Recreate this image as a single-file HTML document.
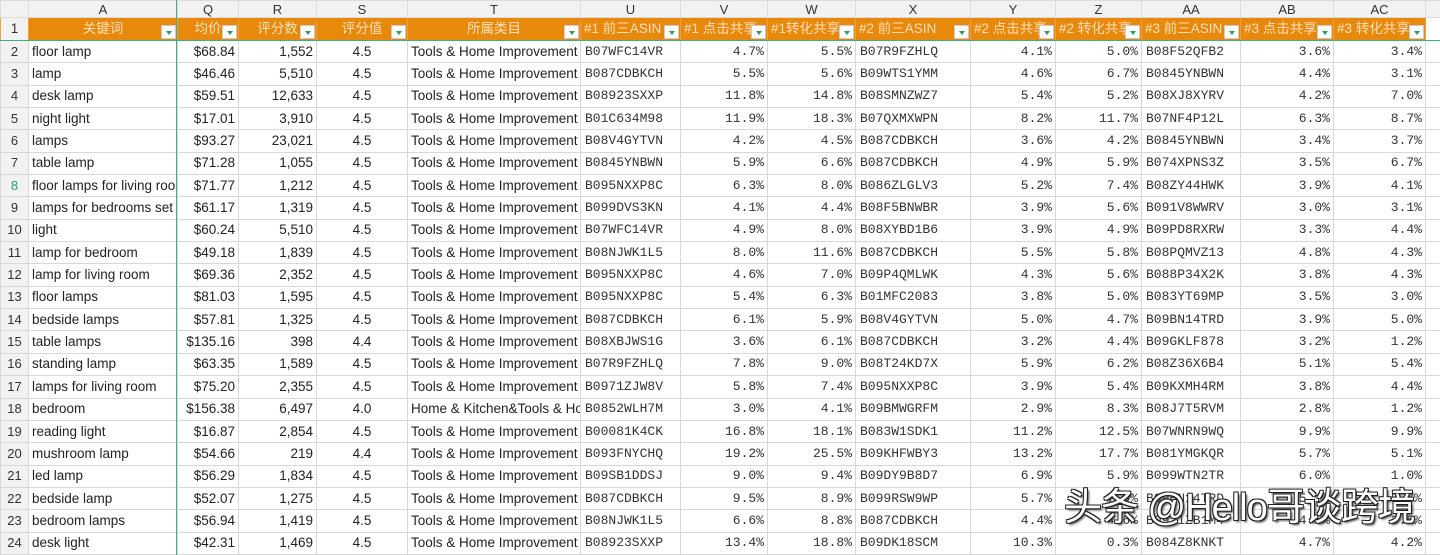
<!DOCTYPE html>
<html><head><meta charset="utf-8"><style>
*{margin:0;padding:0;box-sizing:border-box}
body{width:1440px;height:555px;overflow:hidden;background:#fff;font-family:"Liberation Sans","Noto Sans CJK SC",sans-serif;font-size:13.5px;color:#222;position:relative}
table{border-collapse:collapse;table-layout:fixed;position:absolute;left:0;top:0;width:1440px}
td{border:1px solid #d8d8d8;white-space:nowrap;overflow:hidden;height:22.35px;padding:0 3px;line-height:20px}
tr.ch td{height:17px;background:#f2f2f2;text-align:center;color:#333;font-size:13px;line-height:15px;border-color:#dcdcdc}
tr.h td{height:23px;background:#e8890c;color:#fbe0bc;position:relative;font-size:13.5px;border-color:#f0a040}
tr.h td span.b{position:absolute;right:1px;bottom:1px;width:15px;height:14px;background:#fff;border:1px solid #ccc}
tr.h td span.b:after{content:"";position:absolute;left:4px;top:5px;border-left:3px solid transparent;border-right:3px solid transparent;border-top:4px solid #2a9d6a}
td:first-child{background:#f2f2f2;text-align:center;color:#333;padding:0;font-size:13px}
tr.h td:first-child{background:#f2f2f2;color:#333}
.r td:nth-child(3),.r td:nth-child(4){text-align:right}
.r td:nth-child(5){text-align:center}
.r td:nth-child(n+7){font-family:"Liberation Mono",monospace;font-size:13px;text-align:right;color:#333}
.r td:nth-child(7),.r td:nth-child(10),.r td:nth-child(13){text-align:left;padding-left:4px}
.r td:nth-child(16){background:#fff}
.wm{position:absolute;left:1064px;top:476px;font-size:38px;letter-spacing:-1px;color:#fff;text-shadow:1px 1px 0 #222,-1px -1px 0 #222,1px -1px 0 #222,-1px 1px 0 #222,2px 2px 2px #444;font-family:"Liberation Sans","Noto Sans CJK SC",sans-serif;white-space:nowrap}
.vl{position:absolute;left:176px;top:0;width:1px;height:555px;background:#3cb083}
.hl{position:absolute;left:0;top:40px;width:1440px;height:1px;background:#3cb083}
</style></head><body>
<table>
<colgroup><col style="width:28px"><col style="width:149px"><col style="width:61px"><col style="width:78px"><col style="width:91px"><col style="width:173px"><col style="width:100px"><col style="width:87px"><col style="width:88px"><col style="width:115px"><col style="width:85px"><col style="width:86px"><col style="width:99px"><col style="width:93px"><col style="width:92px"><col style="width:15px"></colgroup>
<tr class="ch"><td></td><td>A</td><td>Q</td><td>R</td><td>S</td><td>T</td><td>U</td><td>V</td><td>W</td><td>X</td><td>Y</td><td>Z</td><td>AA</td><td>AB</td><td>AC</td><td></td></tr>
<tr class="h"><td>1</td><td style="text-align:center">关键词<span class="b"></span></td><td style="text-align:center">均价<span class="b"></span></td><td style="text-align:center">评分数<span class="b"></span></td><td style="text-align:center">评分值<span class="b"></span></td><td style="text-align:center">所属类目<span class="b"></span></td><td>#1 前三ASIN<span class="b"></span></td><td>#1 点击共享<span class="b"></span></td><td>#1转化共享<span class="b"></span></td><td>#2 前三ASIN<span class="b"></span></td><td>#2 点击共享<span class="b"></span></td><td>#2 转化共享<span class="b"></span></td><td>#3 前三ASIN<span class="b"></span></td><td>#3 点击共享<span class="b"></span></td><td>#3 转化共享<span class="b"></span></td><td style="background:#fff;border-color:#ddd"></td></tr>
<tr class="r"><td>2</td><td>floor lamp</td><td>$68.84</td><td>1,552</td><td>4.5</td><td>Tools &amp; Home Improvement</td><td>B07WFC14VR</td><td>4.7%</td><td>5.5%</td><td>B07R9FZHLQ</td><td>4.1%</td><td>5.0%</td><td>B08F52QFB2</td><td>3.6%</td><td>3.4%</td><td></td></tr>
<tr class="r"><td>3</td><td>lamp</td><td>$46.46</td><td>5,510</td><td>4.5</td><td>Tools &amp; Home Improvement</td><td>B087CDBKCH</td><td>5.5%</td><td>5.6%</td><td>B09WTS1YMM</td><td>4.6%</td><td>6.7%</td><td>B0845YNBWN</td><td>4.4%</td><td>3.1%</td><td></td></tr>
<tr class="r"><td>4</td><td>desk lamp</td><td>$59.51</td><td>12,633</td><td>4.5</td><td>Tools &amp; Home Improvement</td><td>B08923SXXP</td><td>11.8%</td><td>14.8%</td><td>B08SMNZWZ7</td><td>5.4%</td><td>5.2%</td><td>B08XJ8XYRV</td><td>4.2%</td><td>7.0%</td><td></td></tr>
<tr class="r"><td>5</td><td>night light</td><td>$17.01</td><td>3,910</td><td>4.5</td><td>Tools &amp; Home Improvement</td><td>B01C634M98</td><td>11.9%</td><td>18.3%</td><td>B07QXMXWPN</td><td>8.2%</td><td>11.7%</td><td>B07NF4P12L</td><td>6.3%</td><td>8.7%</td><td></td></tr>
<tr class="r"><td>6</td><td>lamps</td><td>$93.27</td><td>23,021</td><td>4.5</td><td>Tools &amp; Home Improvement</td><td>B08V4GYTVN</td><td>4.2%</td><td>4.5%</td><td>B087CDBKCH</td><td>3.6%</td><td>4.2%</td><td>B0845YNBWN</td><td>3.4%</td><td>3.7%</td><td></td></tr>
<tr class="r"><td>7</td><td>table lamp</td><td>$71.28</td><td>1,055</td><td>4.5</td><td>Tools &amp; Home Improvement</td><td>B0845YNBWN</td><td>5.9%</td><td>6.6%</td><td>B087CDBKCH</td><td>4.9%</td><td>5.9%</td><td>B074XPNS3Z</td><td>3.5%</td><td>6.7%</td><td></td></tr>
<tr class="r"><td style="color:#2a9d6a">8</td><td>floor lamps for living room</td><td>$71.77</td><td>1,212</td><td>4.5</td><td>Tools &amp; Home Improvement</td><td>B095NXXP8C</td><td>6.3%</td><td>8.0%</td><td>B086ZLGLV3</td><td>5.2%</td><td>7.4%</td><td>B08ZY44HWK</td><td>3.9%</td><td>4.1%</td><td></td></tr>
<tr class="r"><td>9</td><td>lamps for bedrooms set</td><td>$61.17</td><td>1,319</td><td>4.5</td><td>Tools &amp; Home Improvement</td><td>B099DVS3KN</td><td>4.1%</td><td>4.4%</td><td>B08F5BNWBR</td><td>3.9%</td><td>5.6%</td><td>B091V8WWRV</td><td>3.0%</td><td>3.1%</td><td></td></tr>
<tr class="r"><td>10</td><td>light</td><td>$60.24</td><td>5,510</td><td>4.5</td><td>Tools &amp; Home Improvement</td><td>B07WFC14VR</td><td>4.9%</td><td>8.0%</td><td>B08XYBD1B6</td><td>3.9%</td><td>4.9%</td><td>B09PD8RXRW</td><td>3.3%</td><td>4.4%</td><td></td></tr>
<tr class="r"><td>11</td><td>lamp for bedroom</td><td>$49.18</td><td>1,839</td><td>4.5</td><td>Tools &amp; Home Improvement</td><td>B08NJWK1L5</td><td>8.0%</td><td>11.6%</td><td>B087CDBKCH</td><td>5.5%</td><td>5.8%</td><td>B08PQMVZ13</td><td>4.8%</td><td>4.3%</td><td></td></tr>
<tr class="r"><td>12</td><td>lamp for living room</td><td>$69.36</td><td>2,352</td><td>4.5</td><td>Tools &amp; Home Improvement</td><td>B095NXXP8C</td><td>4.6%</td><td>7.0%</td><td>B09P4QMLWK</td><td>4.3%</td><td>5.6%</td><td>B088P34X2K</td><td>3.8%</td><td>4.3%</td><td></td></tr>
<tr class="r"><td>13</td><td>floor lamps</td><td>$81.03</td><td>1,595</td><td>4.5</td><td>Tools &amp; Home Improvement</td><td>B095NXXP8C</td><td>5.4%</td><td>6.3%</td><td>B01MFC2083</td><td>3.8%</td><td>5.0%</td><td>B083YT69MP</td><td>3.5%</td><td>3.0%</td><td></td></tr>
<tr class="r"><td>14</td><td>bedside lamps</td><td>$57.81</td><td>1,325</td><td>4.5</td><td>Tools &amp; Home Improvement</td><td>B087CDBKCH</td><td>6.1%</td><td>5.9%</td><td>B08V4GYTVN</td><td>5.0%</td><td>4.7%</td><td>B09BN14TRD</td><td>3.9%</td><td>5.0%</td><td></td></tr>
<tr class="r"><td>15</td><td>table lamps</td><td>$135.16</td><td>398</td><td>4.4</td><td>Tools &amp; Home Improvement</td><td>B08XBJWS1G</td><td>3.6%</td><td>6.1%</td><td>B087CDBKCH</td><td>3.2%</td><td>4.4%</td><td>B09GKLF878</td><td>3.2%</td><td>1.2%</td><td></td></tr>
<tr class="r"><td>16</td><td>standing lamp</td><td>$63.35</td><td>1,589</td><td>4.5</td><td>Tools &amp; Home Improvement</td><td>B07R9FZHLQ</td><td>7.8%</td><td>9.0%</td><td>B08T24KD7X</td><td>5.9%</td><td>6.2%</td><td>B08Z36X6B4</td><td>5.1%</td><td>5.4%</td><td></td></tr>
<tr class="r"><td>17</td><td>lamps for living room</td><td>$75.20</td><td>2,355</td><td>4.5</td><td>Tools &amp; Home Improvement</td><td>B0971ZJW8V</td><td>5.8%</td><td>7.4%</td><td>B095NXXP8C</td><td>3.9%</td><td>5.4%</td><td>B09KXMH4RM</td><td>3.8%</td><td>4.4%</td><td></td></tr>
<tr class="r"><td>18</td><td>bedroom</td><td>$156.38</td><td>6,497</td><td>4.0</td><td>Home &amp; Kitchen&amp;Tools &amp; Home</td><td>B0852WLH7M</td><td>3.0%</td><td>4.1%</td><td>B09BMWGRFM</td><td>2.9%</td><td>8.3%</td><td>B08J7T5RVM</td><td>2.8%</td><td>1.2%</td><td></td></tr>
<tr class="r"><td>19</td><td>reading light</td><td>$16.87</td><td>2,854</td><td>4.5</td><td>Tools &amp; Home Improvement</td><td>B00081K4CK</td><td>16.8%</td><td>18.1%</td><td>B083W1SDK1</td><td>11.2%</td><td>12.5%</td><td>B07WNRN9WQ</td><td>9.9%</td><td>9.9%</td><td></td></tr>
<tr class="r"><td>20</td><td>mushroom lamp</td><td>$54.66</td><td>219</td><td>4.4</td><td>Tools &amp; Home Improvement</td><td>B093FNYCHQ</td><td>19.2%</td><td>25.5%</td><td>B09KHFWBY3</td><td>13.2%</td><td>17.7%</td><td>B081YMGKQR</td><td>5.7%</td><td>5.1%</td><td></td></tr>
<tr class="r"><td>21</td><td>led lamp</td><td>$56.29</td><td>1,834</td><td>4.5</td><td>Tools &amp; Home Improvement</td><td>B09SB1DDSJ</td><td>9.0%</td><td>9.4%</td><td>B09DY9B8D7</td><td>6.9%</td><td>5.9%</td><td>B099WTN2TR</td><td>6.0%</td><td>1.0%</td><td></td></tr>
<tr class="r"><td>22</td><td>bedside lamp</td><td>$52.07</td><td>1,275</td><td>4.5</td><td>Tools &amp; Home Improvement</td><td>B087CDBKCH</td><td>9.5%</td><td>8.9%</td><td>B099RSW9WP</td><td>5.7%</td><td>7.9%</td><td>B09BN14TRD</td><td>5.1%</td><td>5.7%</td><td></td></tr>
<tr class="r"><td>23</td><td>bedroom lamps</td><td>$56.94</td><td>1,419</td><td>4.5</td><td>Tools &amp; Home Improvement</td><td>B08NJWK1L5</td><td>6.6%</td><td>8.8%</td><td>B087CDBKCH</td><td>4.4%</td><td>4.6%</td><td>B09J1ZB1M4</td><td>4.5%</td><td>3.6%</td><td></td></tr>
<tr class="r"><td>24</td><td>desk light</td><td>$42.31</td><td>1,469</td><td>4.5</td><td>Tools &amp; Home Improvement</td><td>B08923SXXP</td><td>13.4%</td><td>18.8%</td><td>B09DK18SCM</td><td>10.3%</td><td>0.3%</td><td>B084Z8KNKT</td><td>4.7%</td><td>4.2%</td><td></td></tr>
</table>
<div class="vl"></div><div class="hl"></div>
<div class="wm">头条 @Hello哥谈跨境</div>
</body></html>
